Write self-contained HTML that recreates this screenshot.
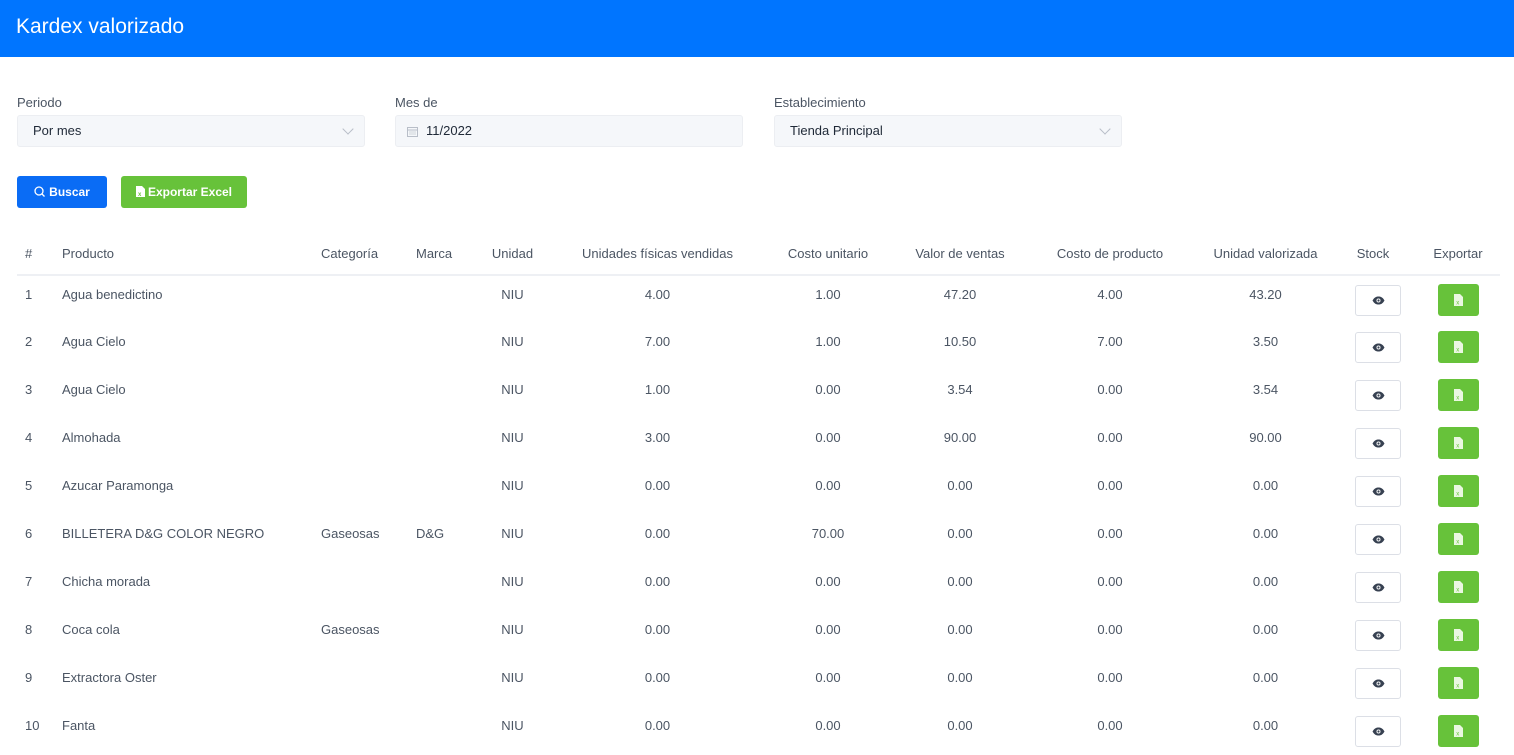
<!DOCTYPE html>
<html><head><meta charset="utf-8"><style>
*{box-sizing:border-box;margin:0;padding:0}
body{width:1514px;height:753px;overflow:hidden;background:#fff;font-family:"Liberation Sans",sans-serif;color:#4b5563;font-size:13px}
.top{height:57px;background:#0075ff;color:#fff;font-size:21px;padding:15px 0 0 16px}
.lbl{position:absolute;font-size:13px;color:#4b5563}
.inp{position:absolute;top:115px;height:32px;width:348px;background:#f5f7fa;border:1px solid #eceef2;border-radius:3px;font-size:13px;color:#1f2937;padding:7px 0 0 15px}
.chev{position:absolute;right:12px;top:9px;width:8px;height:8px;border-right:1px solid #b8bec8;border-bottom:1px solid #b8bec8;transform:rotate(45deg)}
.btn{position:absolute;top:176px;height:32px;border-radius:3px;color:#fff;font-size:12px;font-weight:bold;padding:9px 0 0 0;text-align:center}
table{position:absolute;left:17px;top:234px;border-collapse:collapse;table-layout:fixed;width:1483px}
th{font-weight:normal;height:41px;border-bottom:2px solid #eef0f4;vertical-align:middle;padding-bottom:2px;font-size:13px;color:#4b5563}
td{height:48px;vertical-align:top;padding-top:10px;line-height:18px;color:#4b5563}
.l{text-align:left;padding-left:12px}.c{text-align:center}
.eye{display:inline-block;width:46px;height:31px;border:1px solid #dcdfe6;border-radius:3px;margin-top:-1px;position:relative;top:0}
.xl{display:inline-block;width:41px;height:32px;background:#67c23a;border-radius:3px;margin-top:-2px}
</style></head><body>
<div class="top">Kardex valorizado</div>
<div class="lbl" style="left:17px;top:95px">Periodo</div>
<div class="lbl" style="left:395px;top:95px">Mes de</div>
<div class="lbl" style="left:774px;top:95px">Establecimiento</div>
<div class="inp" style="left:17px">Por mes<div class="chev"></div></div>
<div class="inp" style="left:395px;padding-left:30px">11/2022<svg style="position:absolute;left:11px;top:10px" width="11" height="11" viewBox="0 0 11 11"><rect x="0.5" y="1.5" width="10" height="9" fill="none" stroke="#b8bec8"/><line x1="0.5" y1="4" x2="10.5" y2="4" stroke="#b8bec8"/><path d="M2 6h7M2 8h7" stroke="#d0d4da"/></svg></div>
<div class="inp" style="left:774px">Tienda Principal<div class="chev"></div></div>
<div class="btn" style="left:17px;width:90px;background:#0a6cf5"><svg width="11" height="11" viewBox="0 0 11 11" style="vertical-align:-1px;margin-right:4px"><circle cx="5" cy="5" r="4" fill="none" stroke="#fff" stroke-width="1.3"/><line x1="8" y1="8" x2="10.5" y2="10.5" stroke="#fff" stroke-width="1.3"/></svg>Buscar</div>
<div class="btn" style="left:121px;width:126px;background:#67c23a"><svg width="9" height="11" viewBox="0 0 9 11" style="vertical-align:-1px;margin-right:3px"><path d="M0 0h6l3 3v8H0z" fill="#fff"/><text x="2" y="10" font-size="6" fill="#67c23a" font-family="Liberation Sans">x</text></svg>Exportar Excel</div>
<table>
<colgroup><col style="width:33px"><col style="width:259px"><col style="width:95px"><col style="width:71px"><col style="width:75px"><col style="width:215px"><col style="width:126px"><col style="width:138px"><col style="width:162px"><col style="width:149px"><col style="width:76px"><col style="width:84px"></colgroup>
<tr><th class="l" style="padding-left:8px">#</th><th class="l">Producto</th><th class="l">Categoría</th><th class="l">Marca</th><th class="c">Unidad</th><th class="c">Unidades físicas vendidas</th><th class="c">Costo unitario</th><th class="c">Valor de ventas</th><th class="c">Costo de producto</th><th class="c">Unidad valorizada</th><th class="c" style="padding-right:10px">Stock</th><th class="c">Exportar</th></tr>
<!--ROWS-->
<tr><td class="l" style="padding-left:8px">1</td><td class="l">Agua benedictino</td><td class="l"></td><td class="l"></td><td class="c">NIU</td><td class="c">4.00</td><td class="c">1.00</td><td class="c">47.20</td><td class="c">4.00</td><td class="c">43.20</td><td class="c"><span class="eye"><svg style="position:absolute;left:16px;top:10px" width="13" height="9" viewBox="0 0 13 9"><path d="M0.5 4.5C2.5 1 4.5 0.5 6.5 0.5S10.5 1 12.5 4.5C10.5 8 8.5 8.5 6.5 8.5S2.5 8 0.5 4.5z" fill="#374151"/><circle cx="6.5" cy="4.5" r="2" fill="#fff"/><circle cx="6.5" cy="4.5" r="1.1" fill="#374151"/></svg></span></td><td class="c"><span class="xl"><svg style="margin-top:10px" width="9" height="12" viewBox="0 0 9 12"><path d="M0 0h6l3 3v9H0z" fill="#eaf7e1"/><text x="2.2" y="10.5" font-size="6" fill="#67c23a" font-family="Liberation Sans">x</text></svg></span></td></tr>
<tr><td class="l" style="padding-left:8px">2</td><td class="l">Agua Cielo</td><td class="l"></td><td class="l"></td><td class="c">NIU</td><td class="c">7.00</td><td class="c">1.00</td><td class="c">10.50</td><td class="c">7.00</td><td class="c">3.50</td><td class="c"><span class="eye"><svg style="position:absolute;left:16px;top:10px" width="13" height="9" viewBox="0 0 13 9"><path d="M0.5 4.5C2.5 1 4.5 0.5 6.5 0.5S10.5 1 12.5 4.5C10.5 8 8.5 8.5 6.5 8.5S2.5 8 0.5 4.5z" fill="#374151"/><circle cx="6.5" cy="4.5" r="2" fill="#fff"/><circle cx="6.5" cy="4.5" r="1.1" fill="#374151"/></svg></span></td><td class="c"><span class="xl"><svg style="margin-top:10px" width="9" height="12" viewBox="0 0 9 12"><path d="M0 0h6l3 3v9H0z" fill="#eaf7e1"/><text x="2.2" y="10.5" font-size="6" fill="#67c23a" font-family="Liberation Sans">x</text></svg></span></td></tr>
<tr><td class="l" style="padding-left:8px">3</td><td class="l">Agua Cielo</td><td class="l"></td><td class="l"></td><td class="c">NIU</td><td class="c">1.00</td><td class="c">0.00</td><td class="c">3.54</td><td class="c">0.00</td><td class="c">3.54</td><td class="c"><span class="eye"><svg style="position:absolute;left:16px;top:10px" width="13" height="9" viewBox="0 0 13 9"><path d="M0.5 4.5C2.5 1 4.5 0.5 6.5 0.5S10.5 1 12.5 4.5C10.5 8 8.5 8.5 6.5 8.5S2.5 8 0.5 4.5z" fill="#374151"/><circle cx="6.5" cy="4.5" r="2" fill="#fff"/><circle cx="6.5" cy="4.5" r="1.1" fill="#374151"/></svg></span></td><td class="c"><span class="xl"><svg style="margin-top:10px" width="9" height="12" viewBox="0 0 9 12"><path d="M0 0h6l3 3v9H0z" fill="#eaf7e1"/><text x="2.2" y="10.5" font-size="6" fill="#67c23a" font-family="Liberation Sans">x</text></svg></span></td></tr>
<tr><td class="l" style="padding-left:8px">4</td><td class="l">Almohada</td><td class="l"></td><td class="l"></td><td class="c">NIU</td><td class="c">3.00</td><td class="c">0.00</td><td class="c">90.00</td><td class="c">0.00</td><td class="c">90.00</td><td class="c"><span class="eye"><svg style="position:absolute;left:16px;top:10px" width="13" height="9" viewBox="0 0 13 9"><path d="M0.5 4.5C2.5 1 4.5 0.5 6.5 0.5S10.5 1 12.5 4.5C10.5 8 8.5 8.5 6.5 8.5S2.5 8 0.5 4.5z" fill="#374151"/><circle cx="6.5" cy="4.5" r="2" fill="#fff"/><circle cx="6.5" cy="4.5" r="1.1" fill="#374151"/></svg></span></td><td class="c"><span class="xl"><svg style="margin-top:10px" width="9" height="12" viewBox="0 0 9 12"><path d="M0 0h6l3 3v9H0z" fill="#eaf7e1"/><text x="2.2" y="10.5" font-size="6" fill="#67c23a" font-family="Liberation Sans">x</text></svg></span></td></tr>
<tr><td class="l" style="padding-left:8px">5</td><td class="l">Azucar Paramonga</td><td class="l"></td><td class="l"></td><td class="c">NIU</td><td class="c">0.00</td><td class="c">0.00</td><td class="c">0.00</td><td class="c">0.00</td><td class="c">0.00</td><td class="c"><span class="eye"><svg style="position:absolute;left:16px;top:10px" width="13" height="9" viewBox="0 0 13 9"><path d="M0.5 4.5C2.5 1 4.5 0.5 6.5 0.5S10.5 1 12.5 4.5C10.5 8 8.5 8.5 6.5 8.5S2.5 8 0.5 4.5z" fill="#374151"/><circle cx="6.5" cy="4.5" r="2" fill="#fff"/><circle cx="6.5" cy="4.5" r="1.1" fill="#374151"/></svg></span></td><td class="c"><span class="xl"><svg style="margin-top:10px" width="9" height="12" viewBox="0 0 9 12"><path d="M0 0h6l3 3v9H0z" fill="#eaf7e1"/><text x="2.2" y="10.5" font-size="6" fill="#67c23a" font-family="Liberation Sans">x</text></svg></span></td></tr>
<tr><td class="l" style="padding-left:8px">6</td><td class="l">BILLETERA D&amp;G COLOR NEGRO</td><td class="l">Gaseosas</td><td class="l">D&amp;G</td><td class="c">NIU</td><td class="c">0.00</td><td class="c">70.00</td><td class="c">0.00</td><td class="c">0.00</td><td class="c">0.00</td><td class="c"><span class="eye"><svg style="position:absolute;left:16px;top:10px" width="13" height="9" viewBox="0 0 13 9"><path d="M0.5 4.5C2.5 1 4.5 0.5 6.5 0.5S10.5 1 12.5 4.5C10.5 8 8.5 8.5 6.5 8.5S2.5 8 0.5 4.5z" fill="#374151"/><circle cx="6.5" cy="4.5" r="2" fill="#fff"/><circle cx="6.5" cy="4.5" r="1.1" fill="#374151"/></svg></span></td><td class="c"><span class="xl"><svg style="margin-top:10px" width="9" height="12" viewBox="0 0 9 12"><path d="M0 0h6l3 3v9H0z" fill="#eaf7e1"/><text x="2.2" y="10.5" font-size="6" fill="#67c23a" font-family="Liberation Sans">x</text></svg></span></td></tr>
<tr><td class="l" style="padding-left:8px">7</td><td class="l">Chicha morada</td><td class="l"></td><td class="l"></td><td class="c">NIU</td><td class="c">0.00</td><td class="c">0.00</td><td class="c">0.00</td><td class="c">0.00</td><td class="c">0.00</td><td class="c"><span class="eye"><svg style="position:absolute;left:16px;top:10px" width="13" height="9" viewBox="0 0 13 9"><path d="M0.5 4.5C2.5 1 4.5 0.5 6.5 0.5S10.5 1 12.5 4.5C10.5 8 8.5 8.5 6.5 8.5S2.5 8 0.5 4.5z" fill="#374151"/><circle cx="6.5" cy="4.5" r="2" fill="#fff"/><circle cx="6.5" cy="4.5" r="1.1" fill="#374151"/></svg></span></td><td class="c"><span class="xl"><svg style="margin-top:10px" width="9" height="12" viewBox="0 0 9 12"><path d="M0 0h6l3 3v9H0z" fill="#eaf7e1"/><text x="2.2" y="10.5" font-size="6" fill="#67c23a" font-family="Liberation Sans">x</text></svg></span></td></tr>
<tr><td class="l" style="padding-left:8px">8</td><td class="l">Coca cola</td><td class="l">Gaseosas</td><td class="l"></td><td class="c">NIU</td><td class="c">0.00</td><td class="c">0.00</td><td class="c">0.00</td><td class="c">0.00</td><td class="c">0.00</td><td class="c"><span class="eye"><svg style="position:absolute;left:16px;top:10px" width="13" height="9" viewBox="0 0 13 9"><path d="M0.5 4.5C2.5 1 4.5 0.5 6.5 0.5S10.5 1 12.5 4.5C10.5 8 8.5 8.5 6.5 8.5S2.5 8 0.5 4.5z" fill="#374151"/><circle cx="6.5" cy="4.5" r="2" fill="#fff"/><circle cx="6.5" cy="4.5" r="1.1" fill="#374151"/></svg></span></td><td class="c"><span class="xl"><svg style="margin-top:10px" width="9" height="12" viewBox="0 0 9 12"><path d="M0 0h6l3 3v9H0z" fill="#eaf7e1"/><text x="2.2" y="10.5" font-size="6" fill="#67c23a" font-family="Liberation Sans">x</text></svg></span></td></tr>
<tr><td class="l" style="padding-left:8px">9</td><td class="l">Extractora Oster</td><td class="l"></td><td class="l"></td><td class="c">NIU</td><td class="c">0.00</td><td class="c">0.00</td><td class="c">0.00</td><td class="c">0.00</td><td class="c">0.00</td><td class="c"><span class="eye"><svg style="position:absolute;left:16px;top:10px" width="13" height="9" viewBox="0 0 13 9"><path d="M0.5 4.5C2.5 1 4.5 0.5 6.5 0.5S10.5 1 12.5 4.5C10.5 8 8.5 8.5 6.5 8.5S2.5 8 0.5 4.5z" fill="#374151"/><circle cx="6.5" cy="4.5" r="2" fill="#fff"/><circle cx="6.5" cy="4.5" r="1.1" fill="#374151"/></svg></span></td><td class="c"><span class="xl"><svg style="margin-top:10px" width="9" height="12" viewBox="0 0 9 12"><path d="M0 0h6l3 3v9H0z" fill="#eaf7e1"/><text x="2.2" y="10.5" font-size="6" fill="#67c23a" font-family="Liberation Sans">x</text></svg></span></td></tr>
<tr><td class="l" style="padding-left:8px">10</td><td class="l">Fanta</td><td class="l"></td><td class="l"></td><td class="c">NIU</td><td class="c">0.00</td><td class="c">0.00</td><td class="c">0.00</td><td class="c">0.00</td><td class="c">0.00</td><td class="c"><span class="eye"><svg style="position:absolute;left:16px;top:10px" width="13" height="9" viewBox="0 0 13 9"><path d="M0.5 4.5C2.5 1 4.5 0.5 6.5 0.5S10.5 1 12.5 4.5C10.5 8 8.5 8.5 6.5 8.5S2.5 8 0.5 4.5z" fill="#374151"/><circle cx="6.5" cy="4.5" r="2" fill="#fff"/><circle cx="6.5" cy="4.5" r="1.1" fill="#374151"/></svg></span></td><td class="c"><span class="xl"><svg style="margin-top:10px" width="9" height="12" viewBox="0 0 9 12"><path d="M0 0h6l3 3v9H0z" fill="#eaf7e1"/><text x="2.2" y="10.5" font-size="6" fill="#67c23a" font-family="Liberation Sans">x</text></svg></span></td></tr>
</table>
</body></html>
